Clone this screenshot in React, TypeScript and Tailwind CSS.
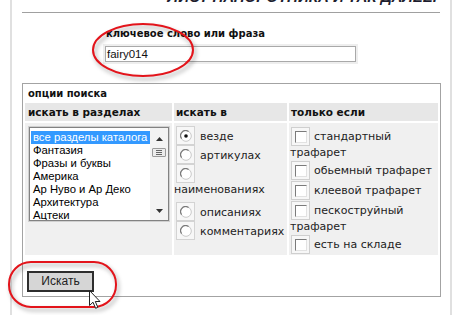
import React from "react";

const sections = [
  "все разделы каталога",
  "Фантазия",
  "Фразы и буквы",
  "Америка",
  "Ар Нуво и Ар Деко",
  "Архитектура",
  "Ацтеки",
];

function Radio({ checked = false }: { checked?: boolean }) {
  return (
    <span className="flex w-[19px] h-[19px] shrink-0 items-center justify-center border border-[#d3d3d3] bg-[#f7f7f7]">
      <svg width="12" height="12" viewBox="0 0 12 12">
        <circle cx="6" cy="6" r="5.3" fill="#fff" stroke="#c8c8c8" />
        <path d="M1.6 8.6 A5 5 0 0 1 8.6 1.6" fill="none" stroke="#7a7a7a" strokeWidth="1.2" />
        {checked && <circle cx="6" cy="6" r="1.8" fill="#111" />}
      </svg>
    </span>
  );
}

function Check() {
  return (
    <span className="flex w-[19px] h-[19px] shrink-0 items-center justify-center border border-[#cfcfcf] bg-[#f7f7f7]">
      <span className="w-[12px] h-[12px] bg-white border border-t-[#7b7b7b] border-l-[#7b7b7b] border-r-[#e2e2e2] border-b-[#e2e2e2]" />
    </span>
  );
}

function RadioRow({ label, checked }: { label?: string; checked?: boolean }) {
  return (
    <div className="flex items-end h-[19px]">
      <Radio checked={checked} />
      {label && <span className="ml-[5px] pb-[1px] leading-[14px]">{label}</span>}
    </div>
  );
}

function CheckRow({ label }: { label: string }) {
  return (
    <div className="flex items-end h-[20px]">
      <Check />
      <span className="ml-[4px] pb-[2px] leading-[14px] whitespace-nowrap">{label}</span>
    </div>
  );
}

export default function App() {
  return (
    <div className="relative w-[459px] h-[315px] overflow-hidden bg-white flex font-['DejaVu_Sans',sans-serif] text-[#111]">
      <div className="w-[10px] shrink-0" />
      <div className="w-[2px] shrink-0 bg-[#e0e0e0]" />

      {/* main column */}
      <div className="w-[438px] shrink-0 pl-[10px] pr-[9px]">
        {/* page heading, scrolled mostly out of view */}
        <div className="h-[12px] flex flex-col">
          <div className="-mt-[11px] pr-[4px] text-right text-[15px] leading-[15px] font-bold italic text-[#1d1d2e] font-['Liberation_Sans',sans-serif] whitespace-nowrap">
            ЛИСТ ПАПОРОТНИКА И ТАК ДАЛЕЕ.
          </div>
        </div>
        <div className="h-[1px] w-[418px] bg-[#a0a0a0]" />

        {/* keyword */}
        <div className="ml-[83px] mt-[15px]">
          <div className="pl-[1px] text-[10px] leading-[12px] font-bold">ключевое слово или фраза</div>
          <div className="mt-[6px] w-[251px] h-[16px] border border-[#a9a9a9] bg-white shadow-[0_0_0_2px_#eeeeee] pl-[1px] text-[11.5px] leading-[14px] text-[#111] font-['Liberation_Sans',sans-serif]">
            fairy014
          </div>
        </div>

        {/* search options box */}
        <div className="mt-[21px] w-[419px] border border-[#a3a3a3] px-[2px] pb-[4px]">
          <div className="pt-[4px] pl-[3px] text-[10px] leading-[11px] font-bold mb-[4px]">опции поиска</div>

          <div className="grid grid-cols-[147px_113px_149px] gap-x-[2px] gap-y-[2px]">
            <div className="h-[18px] bg-[#e7e7e7] pl-[3px] text-[10.5px] leading-[18px] font-bold">искать в разделах</div>
            <div className="h-[18px] bg-[#e7e7e7] pl-[2px] text-[10.5px] leading-[18px] font-bold">искать в</div>
            <div className="h-[18px] bg-[#e7e7e7] pl-[2px] text-[10.5px] leading-[18px] font-bold">только если</div>

            {/* sections listbox */}
            <div className="h-[132px] bg-[#f0f0f0] pt-[4px] pl-[4px]">
              <div className="flex w-[140px] h-[94px] border border-[#828282] bg-white shadow-[0_0_0_1px_#d0d0d0] overflow-hidden">
                <div className="flex-1 pt-[3px] pl-[1px] font-['Liberation_Sans',sans-serif] text-[11.3px] leading-[13px] text-black">
                  {sections.map((s, i) => (
                    <div
                      key={s}
                      className={i === 0 ? "bg-[#3399ff] text-white pl-[2px] whitespace-nowrap" : "pl-[2px] whitespace-nowrap"}
                    >
                      {s}
                    </div>
                  ))}
                </div>
                <div className="w-[18px] shrink-0 bg-[#f3f3f3] flex flex-col items-center">
                  <svg className="mt-[9px]" width="7" height="4" viewBox="0 0 7 4">
                    <path d="M3.5 0 L7 4 L0 4 Z" fill="#333" />
                  </svg>
                  <div className="mt-[7px] w-[14px] h-[9px] border border-[#9a9a9a] bg-[#ececec] rounded-[1px] flex flex-col items-center justify-center gap-[1px]">
                    <span className="w-[6px] h-[1px] bg-[#666]" />
                    <span className="w-[6px] h-[1px] bg-[#666]" />
                    <span className="w-[6px] h-[1px] bg-[#666]" />
                  </div>
                  <div className="flex-1" />
                  <svg className="mb-[7px]" width="7" height="4" viewBox="0 0 7 4">
                    <path d="M0 0 L7 0 L3.5 4 Z" fill="#333" />
                  </svg>
                </div>
              </div>
            </div>

            {/* search in */}
            <div className="h-[132px] bg-[#f0f0f0] pt-[3px] pl-[2px] text-[11px] text-[#222]">
              <RadioRow label="везде" checked />
              <RadioRow label="артикулах" />
              <RadioRow />
              <div className="h-[19px] -ml-[2px] leading-[14px]">наименованиях</div>
              <RadioRow label="описаниях" />
              <RadioRow label="комментариях" />
            </div>

            {/* only if */}
            <div className="h-[132px] bg-[#f0f0f0] pt-[3px] pl-[2px] text-[11px] text-[#222]">
              <CheckRow label="стандартный" />
              <div className="h-[14px] -ml-[1px] leading-[14px]">трафарет</div>
              <CheckRow label="обьемный трафарет" />
              <CheckRow label="клеевой трафарет" />
              <CheckRow label="пескоструйный" />
              <div className="h-[14px] -ml-[1px] leading-[14px]">трафарет</div>
              <CheckRow label="есть на складе" />
            </div>
          </div>

          <button className="mt-[16px] ml-[2px] w-[67px] h-[21px] border-2 border-[#2e2e2e] bg-[#d6d6d6] text-[12px] leading-[17px] text-[#222] font-['Liberation_Sans',sans-serif] block">
            Искать
          </button>
        </div>
      </div>

      <div className="w-[2px] shrink-0 bg-[#e0e0e0]" />

      {/* red highlight marks */}
      <svg className="absolute left-0 top-0 pointer-events-none drop-shadow-[2px_3px_2px_rgba(0,0,0,0.35)]" width="459" height="315">
        <ellipse cx="143" cy="50" rx="50" ry="26" fill="none" stroke="#e3141b" strokeWidth="2" />
        <rect x="9" y="262" width="107" height="45" rx="22" fill="none" stroke="#e3141b" strokeWidth="2" />
      </svg>

      {/* mouse cursor */}
      <svg className="absolute left-[89px] top-[290px]" width="13" height="20" viewBox="0 0 13 20">
        <path d="M0.5 0.5 L0.5 15.5 L4 12.2 L6.6 18.3 L8.8 17.3 L6.3 11.5 L11 11.5 Z" fill="#fff" stroke="#222" strokeWidth="1" strokeLinejoin="round" />
      </svg>
    </div>
  );
}
